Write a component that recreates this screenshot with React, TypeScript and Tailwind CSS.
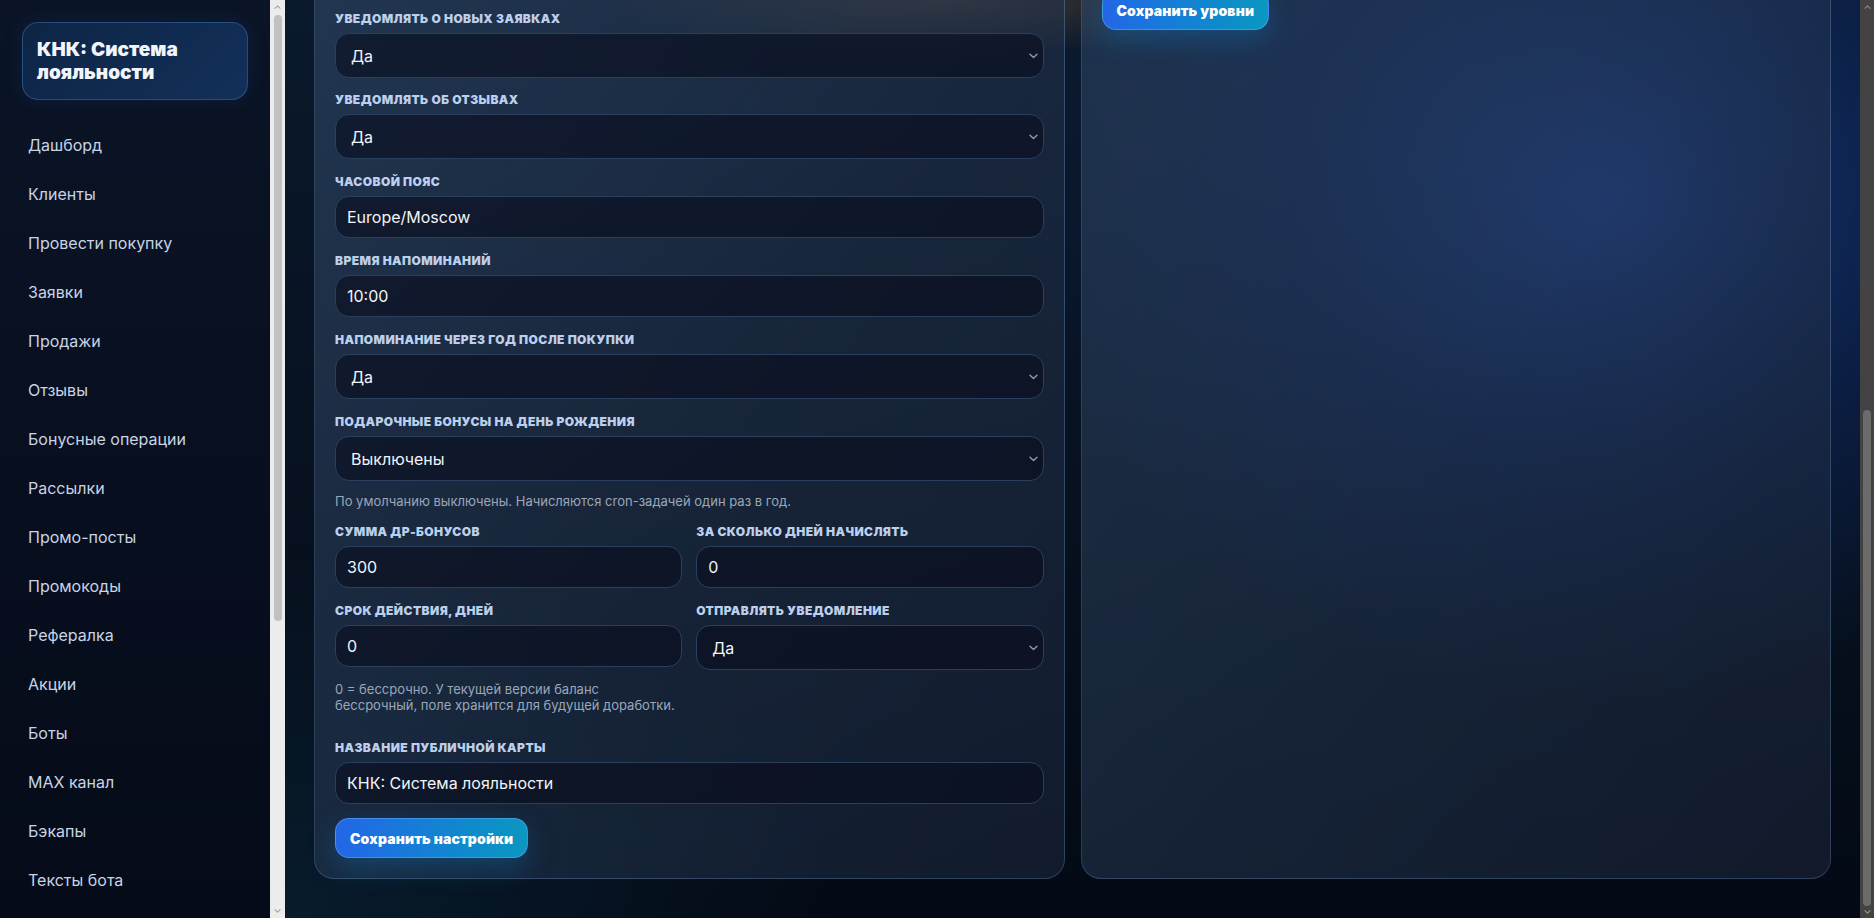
import React from "react";

const NAV_ITEMS = [
  "Дашборд",
  "Клиенты",
  "Провести покупку",
  "Заявки",
  "Продажи",
  "Отзывы",
  "Бонусные операции",
  "Рассылки",
  "Промо-посты",
  "Промокоды",
  "Рефералка",
  "Акции",
  "Боты",
  "MAX канал",
  "Бэкапы",
  "Тексты бота",
];

function Chevron({ className }: { className?: string }) {
  return (
    <svg width="9" height="6" viewBox="0 0 9 6" className={className} fill="none">
      <path d="M1 1.2L4.5 4.6L8 1.2" stroke="currentColor" strokeWidth="1.4" strokeLinecap="round" strokeLinejoin="round" />
    </svg>
  );
}

function Label({ children }: { children: React.ReactNode }) {
  return (
    <div className="mb-[6px] text-[12px] leading-[17px] font-black uppercase tracking-[0.035em] text-[#bccfec]">
      {children}
    </div>
  );
}

function TextField({ label, value }: { label: string; value: string }) {
  return (
    <label className="flex flex-col">
      <Label>{label}</Label>
      <input
        readOnly
        defaultValue={value}
        className="h-[42px] w-full rounded-[14px] border border-[#2b3f5e] bg-[rgba(8,12,28,0.6)] pl-[11px] pr-3 text-[16px] text-[#f1f4f9] outline-none"
      />
    </label>
  );
}

function SelectField({ label, value, options }: { label: string; value: string; options: string[] }) {
  return (
    <label className="flex flex-col">
      <Label>{label}</Label>
      <div className="relative">
        <select
          defaultValue={value}
          className="h-[45px] w-full appearance-none rounded-[14px] border border-[#2b3f5e] bg-[rgba(8,12,28,0.6)] pl-[15px] pr-8 text-[16px] text-[#f1f4f9] outline-none"
        >
          {options.map((o) => (
            <option key={o} value={o} className="bg-[#0f172a]">
              {o}
            </option>
          ))}
        </select>
        <Chevron className="pointer-events-none absolute right-[6px] top-1/2 -translate-y-1/2 text-[#8f99a8]" />
      </div>
    </label>
  );
}

function SaveButton({ children }: { children: React.ReactNode }) {
  return (
    <button className="h-[40px] rounded-[14px] border border-[rgba(96,165,250,0.55)] bg-gradient-to-r from-[#2366e6] to-[#0c97c0] px-[14px] text-[14px] font-black tracking-[0.01em] text-white shadow-[0_10px_26px_rgba(14,120,190,0.35)]">
      {children}
    </button>
  );
}

function Hint({ children, className = "" }: { children: React.ReactNode; className?: string }) {
  return <p className={`text-[13px] leading-[16px] text-[#9aa7ba] ${className}`}>{children}</p>;
}

function Sidebar() {
  return (
    <aside className="flex h-full w-[270px] shrink-0 flex-col overflow-hidden bg-[linear-gradient(180deg,#0b1527_0%,#080f1f_50%,#050b18_100%)] px-[22px] pt-[22px]">
      <div className="rounded-[16px] border border-[rgba(56,110,165,0.55)] bg-[linear-gradient(135deg,#0e2545_0%,#12305a_100%)] px-[14px] py-[15px] shadow-[0_0_18px_rgba(20,60,120,0.25)]">
        <div className="text-[19px] leading-[23px] font-black text-[#f1f5fb]">КНК: Система лояльности</div>
      </div>
      <nav className="mt-[20px] flex flex-col">
        {NAV_ITEMS.map((item) => (
          <a key={item} className="flex h-[49px] shrink-0 items-center px-[6px] text-[16px] text-[#c8d4e6]">
            {item}
          </a>
        ))}
      </nav>
    </aside>
  );
}

function LightScrollbar() {
  return (
    <div className="flex h-full w-[15px] shrink-0 flex-col items-center bg-[#ececec]">
      <div className="flex h-[14px] items-center justify-center text-[#a3a3a3]">
        <Chevron className="rotate-180 scale-75" />
      </div>
      <div className="mt-[1px] h-[606px] w-[8px] rounded-full bg-[#c1c1c1]" />
      <div className="flex-1" />
      <div className="flex h-[14px] items-center justify-center text-[#a3a3a3]">
        <Chevron className="scale-75" />
      </div>
    </div>
  );
}

function DarkScrollbar() {
  return (
    <div className="flex h-full w-[14px] shrink-0 flex-col items-center bg-[#434343]">
      <div className="flex h-[14px] items-center justify-center text-[#8c8c8c]">
        <Chevron className="rotate-180 scale-75" />
      </div>
      <div className="flex-1" />
      <div className="h-[496px] w-[8px] rounded-full bg-[#6b6b6b]" />
      <div className="flex h-[12px] items-center justify-center text-[#9a9a9a]">
        <Chevron className="scale-75" />
      </div>
    </div>
  );
}

const YES_NO = ["Да", "Нет"];

export default function App() {
  return (
    <div className="flex h-[918px] w-[1874px] overflow-hidden bg-[#050b16] font-['Inter','Noto_Sans',sans-serif]">
      <Sidebar />
      <LightScrollbar />
      <main className="flex h-full min-w-0 flex-1 flex-col justify-end overflow-hidden bg-[image:radial-gradient(ellipse_48%_70%_at_84%_22%,rgba(26,62,140,0.85)_0%,rgba(14,38,92,0.55)_42%,transparent_78%),radial-gradient(ellipse_22%_6%_at_42%_0%,rgba(150,105,60,0.35),transparent_100%),radial-gradient(ellipse_35%_40%_at_0%_100%,rgba(12,40,60,0.6),transparent_100%),linear-gradient(180deg,#0a192c_0%,#07111f_55%,#030a15_100%)] px-[29px] pb-[39px]">
        <div className="grid shrink-0 grid-cols-2 gap-4">
          {/* General settings */}
          <section className="flex flex-col gap-[14px] rounded-[20px] border border-[rgba(120,150,190,0.28)] bg-[linear-gradient(125deg,rgba(52,76,108,0.58)_0%,rgba(36,52,78,0.55)_55%,rgba(28,40,62,0.58)_100%)] px-5 pb-5 pt-[40px]">
            <div className="-mb-[1px]">
              <SelectField label="Уведомлять о новых заявках" value="Да" options={YES_NO} />
            </div>
            <SelectField label="Уведомлять об отзывах" value="Да" options={YES_NO} />
            <TextField label="Часовой пояс" value="Europe/Moscow" />
            <TextField label="Время напоминаний" value="10:00" />
            <SelectField label="Напоминание через год после покупки" value="Да" options={YES_NO} />
            <SelectField label="Подарочные бонусы на день рождения" value="Выключены" options={["Выключены", "Включены"]} />
            <Hint className="-mt-[2px]">По умолчанию выключены. Начисляются cron-задачей один раз в год.</Hint>
            <div className="grid grid-cols-2 gap-[14px]">
              <TextField label="Сумма ДР-бонусов" value="300" />
              <TextField label="За сколько дней начислять" value="0" />
              <TextField label="Срок действия, дней" value="0" />
              <SelectField label="Отправлять уведомление" value="Да" options={YES_NO} />
              <Hint className="-mt-[3px]">
                0 = бессрочно. У текущей версии баланс бессрочный, поле хранится для будущей доработки.
              </Hint>
            </div>
            <div className="mt-[12px]">
              <TextField label="Название публичной карты" value="КНК: Система лояльности" />
            </div>
            <div>
              <SaveButton>Сохранить настройки</SaveButton>
            </div>
          </section>

          {/* Levels */}
          <section className="flex flex-col items-start rounded-[20px] border border-[rgba(120,150,190,0.28)] bg-[linear-gradient(125deg,rgba(52,76,108,0.5)_0%,rgba(40,58,86,0.5)_50%,rgba(26,36,56,0.62)_100%)] p-5">
            <SaveButton>Сохранить уровни</SaveButton>
          </section>
        </div>
      </main>
      <DarkScrollbar />
    </div>
  );
}
